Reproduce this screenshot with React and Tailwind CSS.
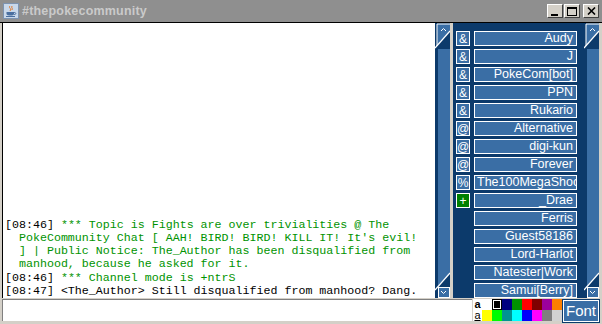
import React from "react";

const users = [
  ["&", "Audy"],
  ["&", "J"],
  ["&", "PokeCom[bot]"],
  ["&", "PPN"],
  ["&", "Rukario"],
  ["@", "Alternative"],
  ["@", "digi-kun"],
  ["@", "Forever"],
  ["%", "The100MegaShock"],
  ["+", "_Drae"],
  ["", "Ferris"],
  ["", "Guest58186"],
  ["", "Lord-Harlot"],
  ["", "Natester|Work"],
  ["", "Samui[Berry]"],
];

const topColors = ["#ffffff", "#000000", "#00007f", "#009300", "#ff0000", "#7f0000", "#9c009c", "#fc7f00"];
const botColors = ["#ffff00", "#00fc00", "#009393", "#00ffff", "#0000fc", "#ff00ff", "#7f7f7f", "#d2d2d2"];

const ScrollBar = () => (
  <div className="flex flex-col w-[15px] h-full bg-[#0c3a6b]">
    <svg width="15" height="26" viewBox="0 0 15 26">
      <rect width="15" height="26" fill="#0c3a6b" />
      <polygon points="2,1 15,1 15,8 2,23" fill="#3a6ea5" />
      <polyline points="2,23 2,1 15,1" fill="none" stroke="#ffffff" strokeWidth="1" />
      <line x1="0" y1="25" x2="15" y2="8" stroke="#ffffff" strokeWidth="1.2" />
      <polyline points="6,8 8.5,5.5 11,8" fill="none" stroke="#ffffff" strokeWidth="1" />
    </svg>
    <div className="flex-1 ml-[3px] bg-[#3a6ea5]" />
    <svg width="15" height="26" viewBox="0 0 15 26">
      <rect width="15" height="26" fill="#0c3a6b" />
      <polygon points="3,0 15,0 15,26 3,26" fill="#3a6ea5" />
      <polygon points="0,26 0,18 15,1 15,26" fill="#0c3a6b" />
      <line x1="0" y1="18" x2="15" y2="1" stroke="#ffffff" strokeWidth="1.2" />
      <rect x="3.5" y="15.5" width="11" height="10" fill="#3a6ea5" stroke="#ffffff" strokeWidth="1" />
      <polyline points="6,19 8.5,21.5 11,19" fill="none" stroke="#ffffff" strokeWidth="1" />
    </svg>
  </div>
);

const JavaIcon = () => (
  <svg width="16" height="16" viewBox="0 0 16 16">
    <rect x="0.5" y="0.5" width="15" height="15" fill="#c9d8ea" stroke="#7d93b0" />
    <path d="M7 3 C5 5 9 5 7 8 M9 3 C8 5 10 5 9 7" stroke="#e0782a" strokeWidth="1" fill="none" />
    <path d="M3.5 9 H11 V11 C11 13 4 13 3.5 11 Z" fill="#4a6fa0" />
    <path d="M11 9.5 C13.5 9.5 13.5 11.5 11 11.5" stroke="#4a6fa0" fill="none" />
    <rect x="3" y="13" width="9" height="1" fill="#4a6fa0" />
  </svg>
);

const WinButton = ({ children }) => (
  <div className="w-[16px] h-[14px] bg-[#d4d0c8] border border-t-white border-l-white border-r-[#404040] border-b-[#404040] flex items-center justify-center">
    {children}
  </div>
);

const G = ({ children }) => <span className="text-[#009300]">{children}</span>;

export default function App() {
  return (
    <div className="w-[602px] h-[324px] bg-[#d4d0c8] flex flex-col overflow-hidden" style={{ fontFamily: '"Liberation Sans", Arial, sans-serif' }}>
      {/* title bar */}
      <div className="h-[22px] bg-[#8f8f8f] flex items-center pl-[3px] pr-[3px]">
        <JavaIcon />
        <span className="ml-[3px] text-[12.5px] font-bold text-[#cacaca] tracking-[0.2px]">#thepokecommunity</span>
        <div className="ml-auto flex gap-[1px] items-center">
          <WinButton>
            <div className="w-[7px] h-[2px] bg-black mt-[7px] -ml-[2px]" />
          </WinButton>
          <WinButton>
            <div className="w-[10px] h-[9px] border border-black border-t-2" />
          </WinButton>
          <div className="ml-[2px]">
            <WinButton>
              <svg width="9" height="8" viewBox="0 0 9 8">
                <path d="M1 0.5 L8 7.5 M8 0.5 L1 7.5" stroke="#000" strokeWidth="1.6" />
              </svg>
            </WinButton>
          </div>
        </div>
      </div>

      {/* main area */}
      <div className="h-[276px] flex border-t border-black">
        <div className="w-[2px] bg-[#d4d0c8]" />
        <div
          className="w-[433px] bg-white border-l border-black flex flex-col justify-end pl-[2px] pb-[1px] text-[11.65px] leading-[13.2px] text-black whitespace-pre overflow-hidden"
          style={{ fontFamily: '"Liberation Mono", "Courier New", monospace' }}
        >
          <div>[08:46] <G>*** Topic is Fights are over trivialities @ The</G></div>
          <div><G>  PokeCommunity Chat [ AAH! BIRD! BIRD! KILL IT! It's evil!</G></div>
          <div><G>  ] | Public Notice: The_Author has been disqualified from</G></div>
          <div><G>  manhood, because he asked for it.</G></div>
          <div>[08:46] <G>*** Channel mode is +ntrS</G></div>
          <div>[08:47] &lt;The_Author&gt; Still disqualified from manhood? Dang.</div>
        </div>
        <ScrollBar />
        <div className="w-[3px] bg-[#d4d0c8]" />
        <div className="w-[131px] bg-[#0c3a6b] pt-[8px] pl-[3px] flex flex-col gap-[3px] overflow-hidden">
          {users.map(([p, n]) => (
            <div key={n} className="flex h-[15px] gap-[4px] shrink-0">
              {p ? (
                <div
                  className={`w-[14px] h-[15px] border border-white flex items-center justify-center text-white text-[12px] leading-none ${
                    p === "+" ? "bg-[#008000]" : "bg-[#3a6ea5]"
                  }`}
                >
                  {p}
                </div>
              ) : (
                <div className="w-[14px]" />
              )}
              <div className="w-[103px] h-[15px] border border-white bg-[#3a6ea5] text-white text-[12.5px] leading-[13px] text-right pl-[2px] pr-[3px] overflow-hidden whitespace-nowrap">
                {n}
              </div>
            </div>
          ))}
        </div>
        <ScrollBar />
        <div className="flex-1 bg-[#d4d0c8]" />
      </div>

      {/* bottom bar */}
      <div className="flex-1 flex items-start">
        <div className="ml-[2px] mt-[1px] w-[470px] h-[22px] bg-white border-t border-l border-[#808080]" />
        <div className="ml-[1px] mt-[1px] flex flex-col bg-white">
          <div className="flex h-[11px]">
            <div className="w-[9px] flex items-center justify-center text-[11px] font-bold leading-none text-black">a</div>
            {topColors.map((c, i) => (
              <div key={c} className="w-[10px] h-[11px]" style={{ background: i === 1 ? "#ffffff" : c }}>
                {i === 1 && <div className="w-[8px] h-[9px] m-[1px] bg-black border border-white outline outline-1 outline-black" />}
              </div>
            ))}
          </div>
          <div className="flex h-[11px]">
            <div className="w-[9px] flex items-center justify-center text-[11px] leading-none text-black underline">a</div>
            {botColors.map((c) => (
              <div key={c} className="w-[10px] h-[11px]" style={{ background: c }} />
            ))}
          </div>
        </div>
        <div className="ml-[1px] mt-[2px] w-[36px] h-[22px] bg-[#3a6ea5] border border-white outline outline-1 outline-[#0c3a6b] flex items-center justify-center text-white text-[15px]">
          Font
        </div>
      </div>
    </div>
  );
}
